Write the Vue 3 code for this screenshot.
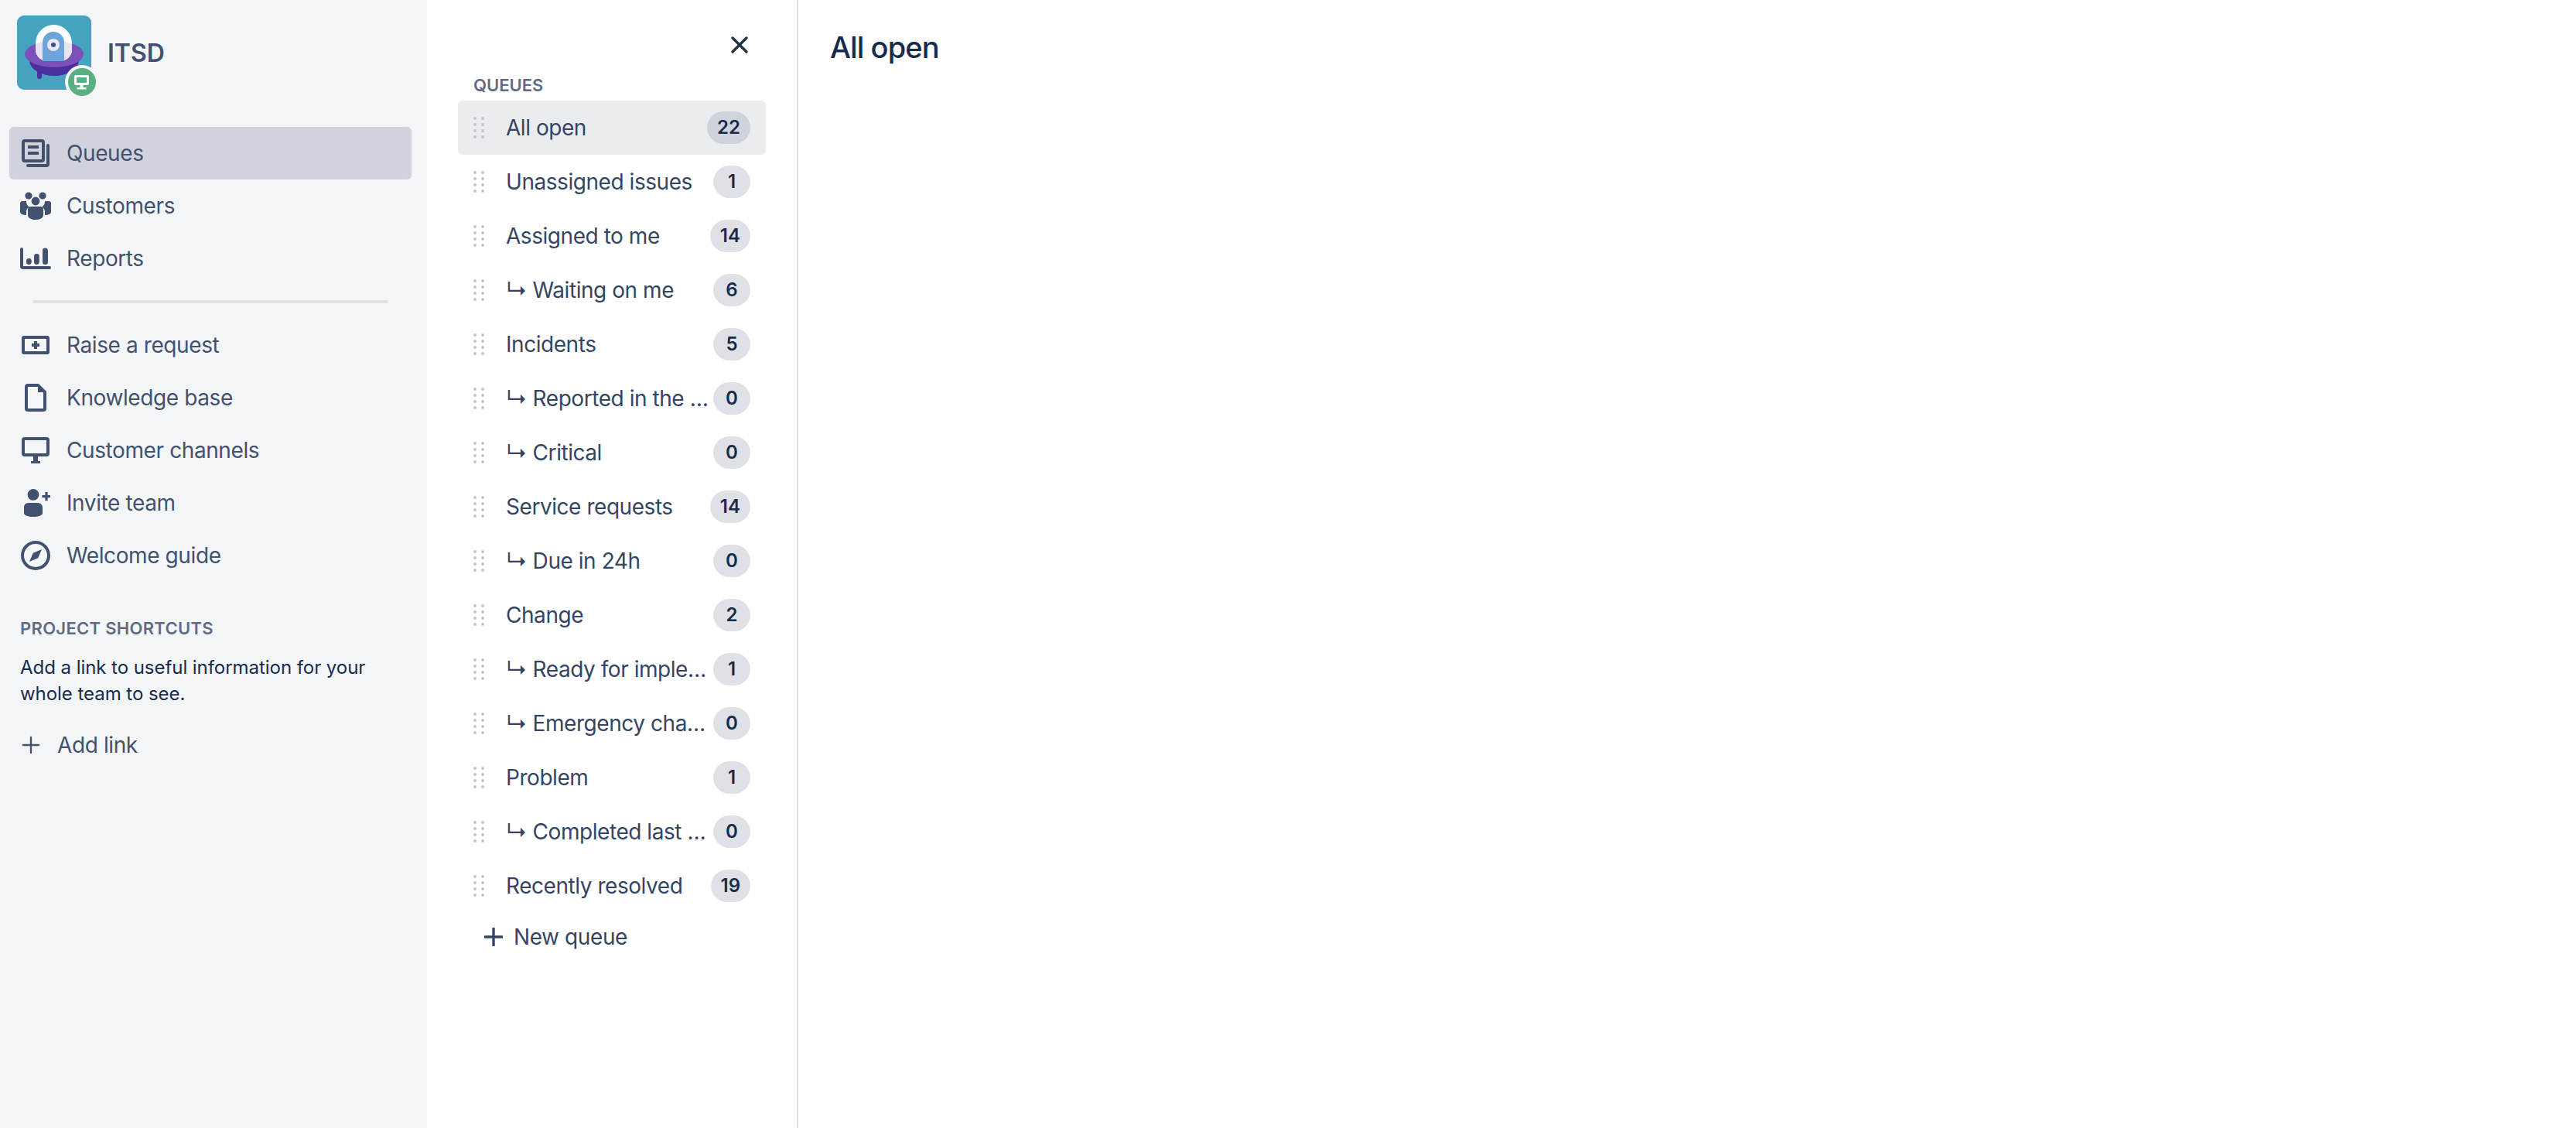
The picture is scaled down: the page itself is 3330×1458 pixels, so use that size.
<script setup>
import { ref } from 'vue';

// icon shapes, drawn on a 24x24 box
const icons = {
  queues: 'M5 3h11a2 2 0 0 1 2 2v11a2 2 0 0 1-2 2H5a2 2 0 0 1-2-2V5a2 2 0 0 1 2-2zm0 2v11h11V5H5zM7 7h7v2H7zM7 11h7v2H7zM20 6a1 1 0 0 1 1 1v12a2 2 0 0 1-2 2H7a1 1 0 0 1 0-2h12V7a1 1 0 0 1 1-1z',
  customers: 'M7.5 3.2a2.3 2.3 0 1 1 0 4.6 2.3 2.3 0 0 1 0-4.6zM16.5 3.2a2.3 2.3 0 1 1 0 4.6 2.3 2.3 0 0 1 0-4.6zM12 6.3a2.7 2.7 0 1 1 0 5.4 2.7 2.7 0 0 1 0-5.4zM9 12.5h6a2 2 0 0 1 2 2V18c0 2-2.5 3-5 3s-5-1-5-3v-3.5a2 2 0 0 1 2-2zM3.5 9H6a4.5 4.5 0 0 0 2 3.8 3.5 3.5 0 0 0-2 2.7V18c-2 0-4-.6-4-2v-5.5A1.5 1.5 0 0 1 3.5 9zM20.5 9H18a4.5 4.5 0 0 1-2 3.8 3.5 3.5 0 0 1 2 2.7V18c2 0 4-.6 4-2v-5.5A1.5 1.5 0 0 0 20.5 9z',
  reports: 'M3 5a1 1 0 0 1 1 1v11h17a1 1 0 0 1 0 2H4a2 2 0 0 1-2-2V6a1 1 0 0 1 1-1zM7.7 12a1.7 1.7 0 0 1 1.7 1.7v.6a1.7 1.7 0 0 1-3.4 0v-.6A1.7 1.7 0 0 1 7.7 12zM12.7 9a1.7 1.7 0 0 1 1.7 1.7v3.6a1.7 1.7 0 0 1-3.4 0v-3.6A1.7 1.7 0 0 1 12.7 9zM18.2 5.2A1.7 1.7 0 0 1 20 7v7.3a1.7 1.7 0 0 1-3.5 0V7a1.7 1.7 0 0 1 1.7-1.8z',
  raise: 'M4.5 6h15A1.5 1.5 0 0 1 21 7.5v9a1.5 1.5 0 0 1-1.5 1.5h-15A1.5 1.5 0 0 1 3 16.5v-9A1.5 1.5 0 0 1 4.5 6zM5 8v8h14V8H5zM11 9.5h2V11h1.5v2H13v1.5h-2V13H9.5v-2H11z',
  doc: 'M7 3h7l5 5v11a2 2 0 0 1-2 2H7a2 2 0 0 1-2-2V5a2 2 0 0 1 2-2zm0 2v14h10V8.5h-3.5V5H7z',
  monitor: 'M5 3.5h14a2 2 0 0 1 2 2V14a2 2 0 0 1-2 2H5a2 2 0 0 1-2-2V5.5a2 2 0 0 1 2-2zm0 2V14h14V5.5H5zM10.5 16h3v3H15v1.5H9V19h1.5z',
  invite: 'M10.5 3a3.7 3.7 0 1 1 0 7.4 3.7 3.7 0 0 1 0-7.4zM7 12h6.5a3 3 0 0 1 3 3v3.5c0 1.7-2.8 2.5-6 2.5s-6-.8-6-2.5V15A3 3 0 0 1 7 12zM18.2 5h1.6v2H21.5v1.6h-1.7v2h-1.6v-2h-2V7h2z',
  compass: 'M12 2.5a9.5 9.5 0 1 1 0 19 9.5 9.5 0 0 1 0-19zm0 2a7.5 7.5 0 1 0 0 15 7.5 7.5 0 0 0 0-15zM16 8l-2.4 5.6L8 16l2.4-5.6z',
};

const mainNav = [
  { label: 'Queues', icon: 'queues', active: true },
  { label: 'Customers', icon: 'customers' },
  { label: 'Reports', icon: 'reports' },
];

const secondNav = [
  { label: 'Raise a request', icon: 'raise' },
  { label: 'Knowledge base', icon: 'doc' },
  { label: 'Customer channels', icon: 'monitor' },
  { label: 'Invite team', icon: 'invite' },
  { label: 'Welcome guide', icon: 'compass' },
];

const queues = ref([
  { name: 'All open', count: 22 },
  { name: 'Unassigned issues', count: 1 },
  { name: 'Assigned to me', count: 14 },
  { name: '↳ Waiting on me', count: 6 },
  { name: 'Incidents', count: 5 },
  { name: '↳ Reported in the last 24h', count: 0 },
  { name: '↳ Critical', count: 0 },
  { name: 'Service requests', count: 14 },
  { name: '↳ Due in 24h', count: 0 },
  { name: 'Change', count: 2 },
  { name: '↳ Ready for implementation', count: 1 },
  { name: '↳ Emergency changes', count: 0 },
  { name: 'Problem', count: 1 },
  { name: '↳ Completed last 7 days', count: 0 },
  { name: 'Recently resolved', count: 19 },
]);

const selected = ref(0);
const dots = [2, 10, 18, 26];
</script>

<template>
  <div class="page">
    <aside class="sidebar">
      <div class="project">
        <svg class="logo" width="110" height="112" viewBox="0 0 110 112">
          <rect width="96" height="96" rx="9" fill="#46a3bf" />
          <rect x="26" y="60" width="6" height="22" rx="3" fill="#4a2f9e" />
          <ellipse cx="48" cy="58" rx="32" ry="20" fill="#4a2f9e" />
          <ellipse cx="48" cy="50" rx="38" ry="17" fill="#7b50b8" />
          <path d="M24 36a23.5 24 0 0 1 47 0v8a15 15 0 0 1-15 15H39a15 15 0 0 1-15-15z" fill="#fff" />
          <path d="M24 37c7-5 40-5 47 0v7a15 15 0 0 1-15 15H39a15 15 0 0 1-15-15z" fill="#e8e3f3" />
          <path d="M33 35a14 14 0 0 1 28 0v24H33z" fill="#6fa3dc" />
          <circle cx="47" cy="38" r="8" fill="#e9e6f5" />
          <circle cx="47" cy="38" r="3" fill="#42527e" />
          <circle cx="84" cy="86" r="22" fill="#f4f5f7" />
          <circle cx="84" cy="86" r="18" fill="#5bb081" />
          <path d="M76 77h15a2 2 0 0 1 2 2v9a2 2 0 0 1-2 2H76a2 2 0 0 1-2-2v-9a2 2 0 0 1 2-2zm1 3v7h13v-7H77zM81.5 90h4v3h4v2.5h-12V93h4z" fill="#fff" fill-rule="evenodd" />
        </svg>
        <span class="project-name">ITSD</span>
      </div>

      <nav>
        <a v-for="item in mainNav" :key="item.label" class="nav-item" :class="{ active: item.active }">
          <svg class="nav-icon" viewBox="0 0 24 24"><path :d="icons[item.icon]" fill="currentColor" fill-rule="evenodd" /></svg>
          {{ item.label }}
        </a>
      </nav>
      <div class="divider"></div>
      <nav>
        <a v-for="item in secondNav" :key="item.label" class="nav-item">
          <svg class="nav-icon" viewBox="0 0 24 24"><path :d="icons[item.icon]" fill="currentColor" fill-rule="evenodd" /></svg>
          {{ item.label }}
        </a>
      </nav>

      <div class="shortcuts">
        <h4>PROJECT SHORTCUTS</h4>
        <p>Add a link to useful information for your whole team to see.</p>
        <a class="add-link">
          <svg width="24" height="24" viewBox="0 0 24 24"><path d="M12 2v20M2 12h20" stroke="currentColor" stroke-width="2.4" stroke-linecap="round" /></svg>
          Add link
        </a>
      </div>
    </aside>

    <section class="queues">
      <div class="queues-top">
        <svg width="24" height="24" viewBox="0 0 24 24"><path d="M3 3l18 18M21 3L3 21" stroke="#253040" stroke-width="3.4" stroke-linecap="round" /></svg>
      </div>
      <h4>QUEUES</h4>
      <ul>
        <li v-for="(queue, index) in queues" :key="queue.name" class="queue" :class="{ selected: selected === index }">
          <svg class="handle" width="14" height="28" viewBox="0 0 14 28">
            <template v-for="y in dots" :key="y">
              <circle cx="2" :cy="y" r="2" fill="#c1c7d0" />
              <circle cx="12" :cy="y" r="2" fill="#c1c7d0" />
            </template>
          </svg>
          <span class="queue-name">{{ queue.name }}</span>
          <span class="count">{{ queue.count }}</span>
        </li>
      </ul>
      <a class="new-queue">
        <svg width="24" height="24" viewBox="0 0 24 24"><path d="M12 1v22M1 12h22" stroke="currentColor" stroke-width="3.4" stroke-linecap="round" /></svg>
        New queue
      </a>
    </section>

    <main class="content">
      <h1>All open</h1>
    </main>
  </div>
</template>

<style>
body {
  background: #fff;
}
</style>

<style scoped>
.page {
  display: flex;
  height: 1458px;
  font-family: Inter, "Liberation Sans", sans-serif;
  color: #42526e;
  overflow: hidden;
}

/* ---- project sidebar ---- */
.sidebar {
  width: 552px;
  flex: none;
  box-sizing: border-box;
  background: #f4f5f7;
  padding: 0 20px 0 12px;
}

.project {
  display: flex;
  align-items: center;
  height: 164px;
  padding: 20px 0 48px 10px;
  box-sizing: border-box;
}

.logo {
  flex: none;
  margin: 0 -14px -16px 0;
  overflow: visible;
}

.project-name {
  margin-left: 21px;
  font-size: 32px;
  font-weight: 600;
}

.nav-item {
  display: flex;
  align-items: center;
  gap: 16px;
  height: 68px;
  padding-left: 10px;
  border-radius: 6px;
  font-size: 28px;
  letter-spacing: -0.4px;
}

.nav-item.active {
  background: #d0d3dd;
}

.nav-icon {
  width: 48px;
  height: 48px;
  flex: none;
}

.divider {
  height: 4px;
  margin: 20px 30px;
  background: #dfe1e6;
  border-radius: 2px;
}

.shortcuts {
  padding: 48px 14px 0;
}

.shortcuts h4 {
  margin: 0;
  font-size: 22px;
  line-height: 24px;
  font-weight: 600;
  letter-spacing: 0.3px;
  color: #5e6c84;
}

.shortcuts p {
  margin: 22px 0 0;
  width: 490px;
  font-size: 24px;
  line-height: 34px;
  letter-spacing: -0.05px;
  color: #172b4d;
}

.add-link {
  display: flex;
  align-items: center;
  gap: 22px;
  margin: 32px 0 0 2px;
  font-size: 28px;
  line-height: 34px;
  letter-spacing: -0.4px;
}

/* ---- queue list ---- */
.queues {
  width: 480px;
  flex: none;
  box-sizing: border-box;
  padding: 0 40px;
  border-right: 2px solid #dfe1e6;
  color: #344563;
}

.queues-top {
  display: flex;
  justify-content: flex-end;
  align-items: center;
  height: 116px;
  padding: 0 22px 0 0;
  margin-bottom: -16px;
}

.queues h4 {
  margin: 0 0 0 20px;
  height: 30px;
  font-size: 22px;
  line-height: 20px;
  font-weight: 600;
  color: #5e6c84;
}

.queues ul {
  list-style: none;
  margin: 0;
  padding: 0;
}

.queue {
  display: flex;
  align-items: center;
  height: 70px;
  padding: 0 20px;
  border-radius: 6px;
  font-size: 28px;
  letter-spacing: -0.45px;
}

.queue.selected {
  background: #ebecf0;
}

.handle {
  flex: none;
  margin-right: 28px;
}

.queue-name {
  flex: 1;
  min-width: 0;
  margin-right: 2px;
  white-space: nowrap;
  overflow: hidden;
  text-overflow: ellipsis;
}

.count {
  flex: none;
  min-width: 22px;
  padding: 0 13px;
  height: 42px;
  line-height: 42px;
  text-align: center;
  border-radius: 21px;
  background: #dfe1e6;
  font-size: 24px;
  font-weight: 600;
  letter-spacing: 0;
  color: #172b4d;
}

.queue.selected .count {
  background: #cfd3dc;
}

.new-queue {
  display: flex;
  align-items: center;
  gap: 14px;
  height: 62px;
  padding-left: 34px;
  font-size: 28px;
  letter-spacing: -0.4px;
}

/* ---- main ---- */
.content {
  flex: 1;
  padding: 0 41px;
}

.content h1 {
  margin: 0;
  padding-top: 36px;
  font-size: 38px;
  line-height: 50px;
  font-weight: 500;
  letter-spacing: -0.9px;
  color: #172b4d;
}
</style>
